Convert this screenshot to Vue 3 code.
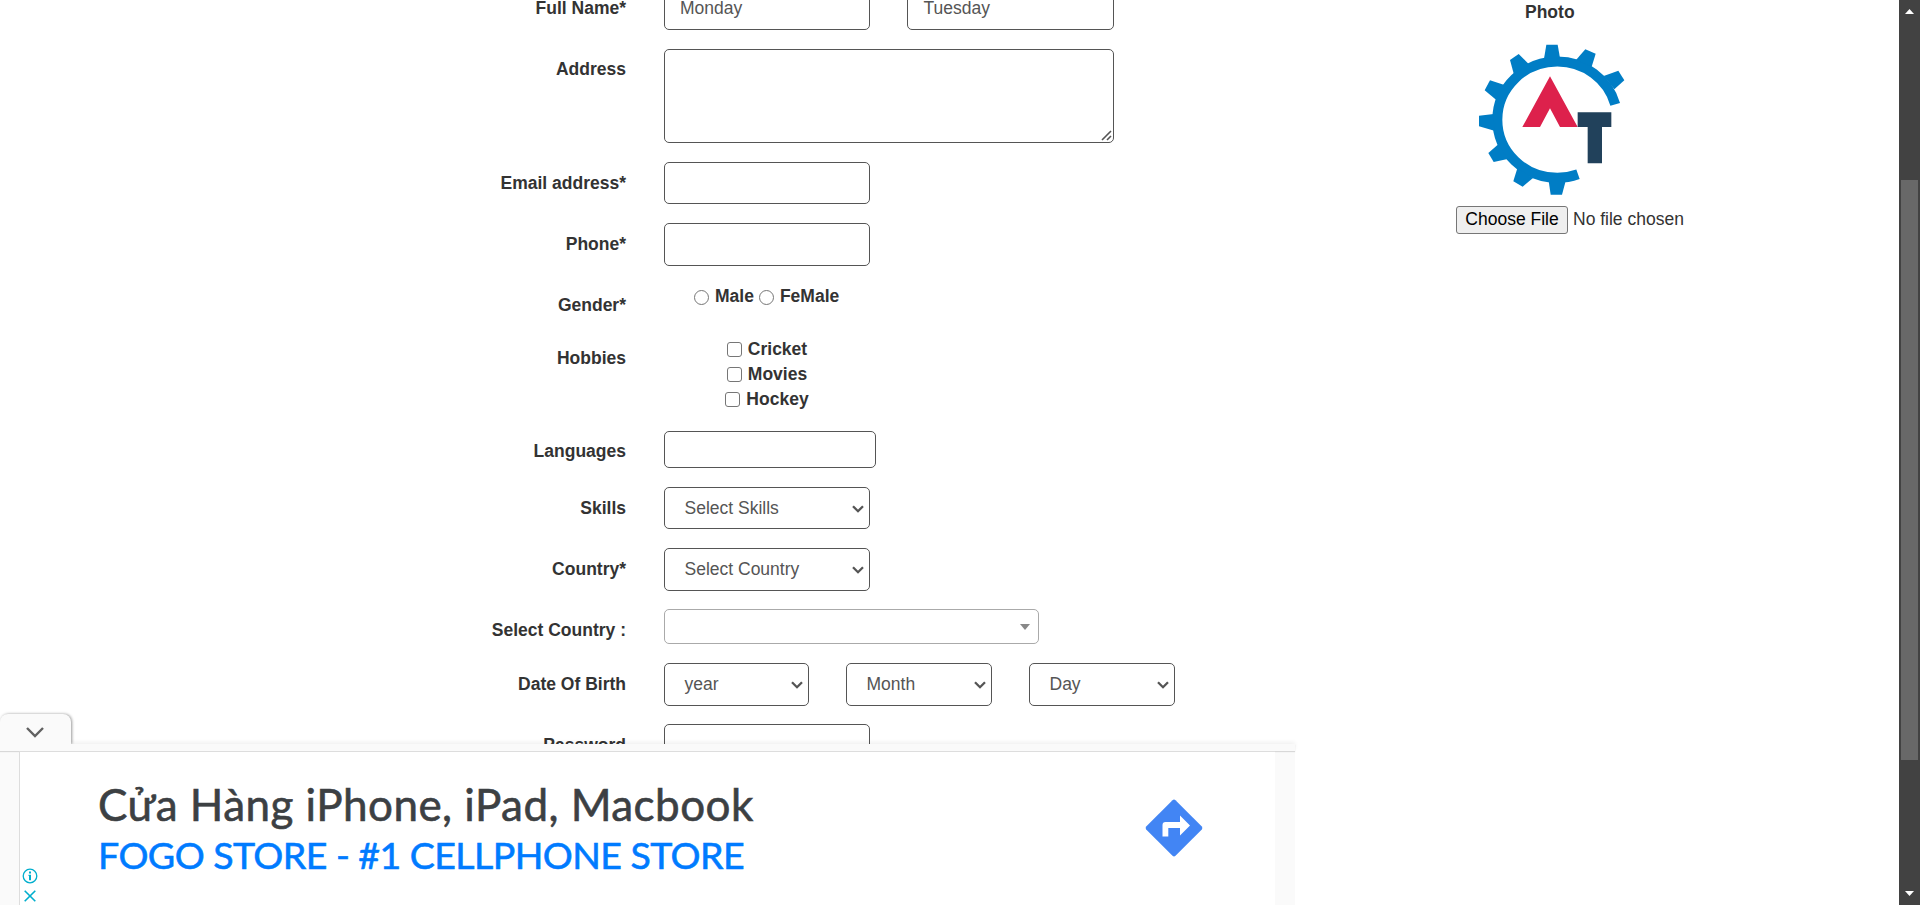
<script setup>
const gears = [
  '320,132 354,132 361,172 313,174',
  '437,146 468,159 456,198 409,178',
  '536,210 554,239 524,266 492,226',
  '237,160 267,190 223,222 211,178',
  '151,239 192,252 170,298 135,269',
  '118,345 162,340 164,390 118,377',
  '146,457 176,431 204,475 162,484',
  '221,542 233,503 280,532 249,558',
  '327,541 378,541 367,582 333,582',
]
const hobbies = ['Cricket', 'Movies', 'Hockey']
const birth = ['year', 'Month', 'Day']
</script>

<template>
  <div class="page">
    <form class="form" @submit.prevent>
      <div class="row r61"><label class="up">Full Name<i>*</i></label>
        <div class="pair"><div class="box w206 h42">Monday</div><div class="box w207 h42 last">Tuesday</div></div>
      </div>
      <div class="row r113"><label class="mid">Address</label>
        <div class="box area">
          <svg class="grip" width="11" height="11" viewBox="0 0 11 11"><path d="M1 10 10 1M6 10l4-4" /></svg>
        </div>
      </div>
      <div class="row r61"><label>Email address<i>*</i></label><div class="box w206 h42"></div></div>
      <div class="row r62"><label>Phone<i>*</i></label><div class="box w206 h43"></div></div>
      <div class="row r53"><label class="mid">Gender<i>*</i></label>
        <div class="radios">
          <span class="radio"></span><b>Male</b><span class="radio second"></span><b>FeMale</b>
        </div>
      </div>
      <div class="row r93"><label class="mid">Hobbies</label>
        <div class="checks">
          <div v-for="h in hobbies" :key="h" class="check"><span class="tick"></span><b>{{ h }}</b></div>
        </div>
      </div>
      <div class="row r56"><label class="mid">Languages</label><div class="box w212 h37"></div></div>
      <div class="row r61"><label>Skills</label>
        <div class="box select w206 h42"><span>Select Skills</span><svg class="chev" width="12" height="8" viewBox="0 0 12 8"><path d="M1 1.200 6 6.200l5-5" /></svg></div>
      </div>
      <div class="row r61"><label>Country<i>*</i></label>
        <div class="box select w206 h43"><span>Select Country</span><svg class="chev" width="12" height="8" viewBox="0 0 12 8"><path d="M1 1.200 6 6.200l5-5" /></svg></div>
      </div>
      <div class="row r54"><label>Select Country :</label><div class="box combo"><span class="caret"></span></div></div>
      <div class="row r61"><label>Date Of Birth</label>
        <div class="pair">
          <div v-for="b in birth" :key="b" class="box select date h43"><span>{{ b }}</span><svg class="chev" width="12" height="8" viewBox="0 0 12 8"><path d="M1 1.200 6 6.200l5-5" /></svg></div>
        </div>
      </div>
      <div class="row r61"><label>Password</label><div class="box w206 h42"></div></div>
    </form>

    <aside class="photo">
      <b class="title">Photo</b>
      <svg class="logo" width="146" height="151" viewBox="118 130 438 453">
        <path d="M526.600 311A180 174.500 0 0 0 353 182.500A180 174.500 0 0 0 173 357A180 174.500 0 0 0 353 531.500A180 174.500 0 0 0 415 520.800" fill="none" stroke="#007dc5" stroke-width="30" />
        <polygon v-for="g in gears" :key="g" :points="g" fill="#007dc5" />
        <polygon points="331,227 414,379 361,379 331,323 301,379 248,379" fill="#dd214c" />
        <path d="M414 335h101v44h-28v109h-43V379h-30z" fill="#21415b" />
      </svg>
      <div class="file"><span class="choose">Choose File</span><span class="none">No file chosen</span></div>
    </aside>

    <div class="scroll">
      <svg width="9" height="5" viewBox="0 0 9 5"><path d="M0 5 4.500 0 9 5z" fill="#fff" /></svg>
      <div class="thumb"></div>
      <svg class="down" width="9" height="5" viewBox="0 0 9 5"><path d="M0 0h9L4.500 5z" fill="#fff" /></svg>
    </div>

    <div class="ad">
      <div class="tab">
        <svg width="18" height="11" viewBox="0 0 18 11"><path d="M1 1l8 8 8-8" fill="none" stroke="#616161" stroke-width="2.400" /></svg>
      </div>
      <div class="bar"></div>
      <div class="frame">
        <div class="creative">
          <div class="marks">
            <svg width="16" height="16" viewBox="0 0 16 16"><circle cx="8" cy="8" r="6.800" fill="none" stroke="#00aecd" stroke-width="1.300" /><path d="M7 3.500h2v2H7zM6.500 6.700H9v5.500H7V8h-.5z" fill="#00aecd" /></svg>
            <svg class="x" width="12" height="12" viewBox="0 0 12 12"><path d="M.7.7l10.600 10.600M11.300.7.7 11.300" stroke="#00aecd" stroke-width="1.600" /></svg>
          </div>
          <div class="copy">
            <div class="head">Cửa Hàng iPhone, iPad, Macbook</div>
            <div class="sub">FOGO STORE - #1 CELLPHONE STORE</div>
          </div>
          <svg class="dir" width="58" height="58" viewBox="0 0 58 58">
            <path d="M27.500 1.200Q29 0 30.500 1.200L56.800 27.500Q58 29 56.800 30.500L30.500 56.800Q29 58 27.500 56.800L1.200 30.500Q0 29 1.200 27.500z" fill="#4285f4" />
            <path d="M17.500 37.500V26Q17.500 23 20.500 23H35v-6.500L45 26.500 35 36.500V29H23.300v8.500z" fill="#fff" />
          </svg>
        </div>
      </div>
    </div>
  </div>
</template>

<style>
body { background: #fff; overflow: hidden; }
</style>
<style scoped>
* { box-sizing: border-box; }
.page { position: relative; display: flex; width: 1920px; height: 905px; overflow: hidden; background: #fff; color: #333; font: 17.5px/25px "Liberation Sans", Arial, sans-serif; }
.form { width: 1456px; flex: none; margin-top: -12px; }
.row { display: flex; align-items: flex-start; }
.r53 { height: 53px; } .r54 { height: 54px; } .r56 { height: 56px; } .r61 { height: 61px; }
.r62 { height: 62px; } .r93 { height: 93px; } .r113 { height: 113px; }
label { width: 626px; margin-right: 38px; padding-top: 9px; text-align: right; font-weight: 700; white-space: nowrap; }
label.up, label.mid { padding-top: 8px; }
label i { font-style: normal; font-weight: 700; }
.box { position: relative; border: 1px solid #555; border-radius: 5px; background: #fff; color: #555; padding: 7px 15px; }
.select { padding: 8px 0 0 19.5px; }
.last { padding-left: 15.5px; }
.h37 { height: 37px; } .h42 { height: 42px; } .h43 { height: 43px; }
.w206 { width: 206px; } .w207 { width: 207px; } .w212 { width: 212px; } .date { width: 146px; }
.date:first-child { width: 145px; }
.pair { display: flex; gap: 37px; }
.area { width: 450px; height: 94px; }
.grip { position: absolute; right: 1px; bottom: 1px; fill: none; stroke: #555; stroke-width: 1.6; }
.chev { position: absolute; right: 5px; top: 17px; fill: none; stroke: #555; stroke-width: 2.3; }
.combo { width: 375px; height: 35px; border-color: #aaa; }
.caret { position: absolute; right: 8px; top: 14px; border: 5px solid transparent; border-top: 6px solid #888; border-bottom: 0; }
.radios { display: flex; align-items: center; margin: -1px 0 0 30px; height: 25px; }
.radio, .tick { width: 15px; height: 15px; flex: none; border: 1px solid #767676; background: #fff; margin-right: 6px; }
.radio { border-radius: 50%; margin-top: 1px; }
.second { margin-left: 5px; }
.tick { border-radius: 3px; margin-bottom: 1px; }
.checks { width: 206px; display: flex; flex-direction: column; align-items: center; margin-top: -1px; }
.check { display: flex; align-items: center; height: 25px; }
.photo { width: 235px; flex: none; }
.title { display: block; margin-left: 69px; }
.logo { display: block; margin: 18.5px 0 0 23px; }
.file { display: flex; margin-top: 11.5px; white-space: nowrap; }
.choose { width: 112px; height: 28px; border: 1px solid #767676; border-radius: 3px; background: #efefef; color: #000; text-align: center; line-height: 25px; }
.none { margin-left: 5px; line-height: 27px; }
.scroll { width: 21px; margin-left: auto; background: #424242; display: flex; flex-direction: column; align-items: center; padding: 9px 0; }
.thumb { width: 17px; height: 580px; margin-top: 166px; background: #686868; }
.down { margin-top: auto; }
.ad { position: absolute; left: 0; top: 714px; width: 1295px; height: 191px; }
.tab { position: relative; z-index: 1; width: 71px; height: 30px; border-radius: 8px 8px 0 0; background: #fafafa; box-shadow: 1px 0 3px rgba(0,0,0,.4); padding: 13px 0 0 26px; clip-path: inset(-5px -5px 0 0); }
.tab svg { display: block; }
.bar { position: relative; height: 7px; background: #fafafa; box-shadow: 0 -2px 4px rgba(0,0,0,.06), 0 1px 1px rgba(0,0,0,.13); }
.frame { height: 154px; background: #fafafa; padding: 0 20px 0 19px; }
.creative { position: relative; height: 154px; display: flex; background: #fff; border-left: 1px solid #ddd; border-top: 1px solid #ddd; }
.marks { width: 16px; margin: 115.5px 0 0 1.5px; }
.marks svg { display: block; }
.marks .x { margin: 6px 0 0 2px; }
.copy { width: 1106px; flex: none; margin-left: 60.5px; padding-top: 25px; font-family: Lato, sans-serif; white-space: nowrap; }
.head { font-size: 44px; line-height: 54px; height: 55px; letter-spacing: .45px; color: #3c4043; -webkit-text-stroke: .6px #3c4043; }
.sub { font-size: 37.5px; line-height: 46px; letter-spacing: -.56px; color: #007bff; -webkit-text-stroke: .6px #007bff; }
.dir { position: absolute; left: 1125.4px; top: 47.4px; }
</style>
